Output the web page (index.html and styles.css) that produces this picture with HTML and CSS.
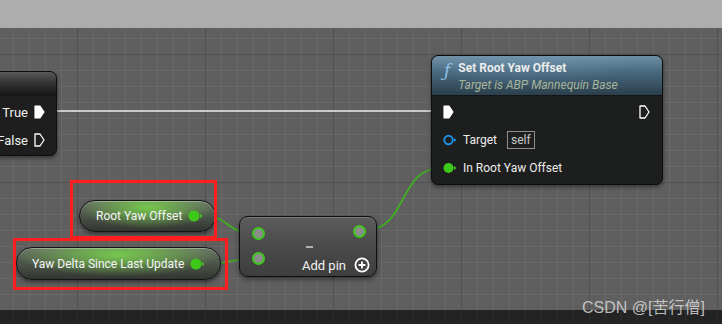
FILE: index.html
```html
<!DOCTYPE html>
<html lang="en">
<head>
<meta charset="utf-8"/>
<meta content="width=device-width, initial-scale=1.0" name="viewport"/>
<title>Blueprint</title>
<link rel="stylesheet" href="styles.css">
</head>
<body>
<div class="topbar"></div>

<div class="graph">
  <!-- wires sit under the nodes -->
  <svg class="wires" width="722" height="282" viewBox="0 0 722 282">
    <path d="M57 83 H431" stroke="#c9c9c9" stroke-width="2" fill="none"/>
    <path d="M203 187 C226 187, 228 205, 251 205" stroke="#3cb41a" stroke-width="1.6" fill="none"/>
    <path d="M206 236 C228 236, 229 231, 251 231" stroke="#3cb41a" stroke-width="1.6" fill="none"/>
    <path d="M365 202 C408 202, 398 140, 441 140" stroke="#3cb41a" stroke-width="1.6" fill="none"/>
  </svg>

  <!-- Branch -->
  <div class="node branch">
    <div class="branch-head"></div>
    <div class="branch-body">
      <div class="row right">True
        <svg class="exec" width="11" height="14" viewBox="0 0 11 14"><path d="M1 1 H6 L10 7 L6 13 H1 Z" fill="#fff" stroke="#fff" stroke-width="1.2" stroke-linejoin="round"/></svg>
      </div>
      <div class="row right">False
        <svg class="exec" width="11" height="14" viewBox="0 0 11 14"><path d="M1 1 H6 L10 7 L6 13 H1 Z" fill="none" stroke="#fff" stroke-width="1.3" stroke-linejoin="round"/></svg>
      </div>
    </div>
  </div>

  <!-- Set Root Yaw Offset -->
  <div class="node fn">
    <div class="fn-head">
      <span class="fn-icon">ƒ</span>
      <div class="fn-titles">
        <div class="fn-title">Set Root Yaw Offset</div>
        <div class="fn-sub">Target is ABP Mannequin Base</div>
      </div>
    </div>
    <div class="fn-body">
      <div class="row between">
        <svg class="exec" width="11" height="14" viewBox="0 0 11 14"><path d="M1 1 H6 L10 7 L6 13 H1 Z" fill="#fff" stroke="#fff" stroke-width="1.2" stroke-linejoin="round"/></svg>
        <svg class="exec" width="11" height="14" viewBox="0 0 11 14"><path d="M1 1 H6 L10 7 L6 13 H1 Z" fill="none" stroke="#fff" stroke-width="1.3" stroke-linejoin="round"/></svg>
      </div>
      <div class="row">
        <svg class="pin" width="14" height="12" viewBox="0 0 14 12"><circle cx="5.5" cy="6" r="4.2" fill="none" stroke="#1f8fe0" stroke-width="2"/><path d="M11 4 L13.5 6 L11 8 Z" fill="#1f8fe0"/></svg>
        <span>Target</span>
        <span class="self">self</span>
      </div>
      <div class="row">
        <svg class="pin" width="14" height="12" viewBox="0 0 14 12"><circle cx="5.5" cy="6" r="5" fill="#3dc81a"/><path d="M11 4 L13.5 6 L11 8 Z" fill="#3dc81a"/></svg>
        <span>In Root Yaw Offset</span>
      </div>
    </div>
  </div>

  <!-- getters -->
  <div class="getter get-root">
    <span>Root Yaw Offset</span>
    <svg class="pin" width="16" height="12" viewBox="0 0 16 12"><circle cx="6" cy="6" r="5.5" fill="#3dc81a"/><path d="M12 4 L14.5 6 L12 8 Z" fill="#3dc81a"/></svg>
  </div>
  <div class="getter get-delta">
    <span>Yaw Delta Since Last Update</span>
    <svg class="pin" width="16" height="12" viewBox="0 0 16 12"><circle cx="6" cy="6" r="5.5" fill="#3dc81a"/><path d="M12 4 L14.5 6 L12 8 Z" fill="#3dc81a"/></svg>
  </div>

  <div class="mark mark-root"></div>
  <div class="mark mark-delta"></div>

  <!-- subtract -->
  <div class="node minus">
    <div class="minus-in">
      <span class="ring"></span>
      <span class="ring"></span>
    </div>
    <div class="minus-mid">
      <span class="dash"></span>
      <span class="add-pin">Add pin
        <svg width="16" height="16" viewBox="0 0 16 16"><circle cx="8" cy="8" r="6.6" fill="none" stroke="#fff" stroke-width="1.8"/><path d="M8 4.6 V11.4 M4.6 8 H11.4" stroke="#fff" stroke-width="1.8"/></svg>
      </span>
    </div>
    <div class="minus-out">
      <span class="ring"></span>
    </div>
  </div>
</div>

<div class="footer"></div>

<div class="watermark">CSDN @[苦行僧]</div>
</body>
</html>
```

FILE: styles.css
```css
body {
    margin: 0;
    width: 722px;
    height: 324px;
    overflow: hidden;
    position: relative;
    font-family: Roboto, "Noto Sans", sans-serif;
    font-size: 12px;
    color: #e6e6e6;
    background: #5f5f5f;
}

.topbar {
    height: 28px;
    background: #adadad;
}

/* graph canvas with minor and major grid lines */
.graph {
    position: relative;
    height: 282px;
    background-color: #5f5f5f;
    background-image:
        linear-gradient(to right, #515151 1px, transparent 1px),
        linear-gradient(to bottom, #515151 1px, transparent 1px),
        linear-gradient(to right, #696969 1px, transparent 1px),
        linear-gradient(to bottom, #696969 1px, transparent 1px);
    background-size: 128px 128px, 128px 128px, 16px 16px, 16px 16px;
    background-position: 77px 0, 0 26px, 13px 0, 0 10px;
}

.footer {
    height: 14px;
    background-color: #232323;
    background-image: linear-gradient(to right, #2d2d2d 1px, transparent 1px);
    background-size: 16px 16px;
    background-position: 13px 0;
}

.wires {
    position: absolute;
    left: 0;
    top: 0;
}

.node {
    position: absolute;
    box-sizing: border-box;
    border: 1px solid #0d0d0d;
    box-shadow: 0 2px 4px rgba(0, 0, 0, 0.45);
}

.row {
    height: 28px;
    display: flex;
    align-items: center;
    gap: 8px;
}
.row.right { justify-content: flex-end; gap: 6px; }
.row.between { justify-content: space-between; }

.exec { display: block; }
.pin { display: block; }

/* Branch */
.branch {
    left: -10px;
    top: 43px;
    width: 67px;
    height: 85px;
    border-radius: 7px;
    background: #1d1e1d;
    overflow: hidden;
}
.branch-head {
    height: 24px;
    background: linear-gradient(#5a5a5a, #333 45%, #161616);
}
.branch-body {
    padding: 2px 11px 0 0;
    font-size: 13px;
    color: #f0f0f0;
}

/* Set Root Yaw Offset */
.fn {
    left: 431px;
    top: 27px;
    width: 232px;
    height: 130px;
    border-radius: 7px;
    background: #1d1f1e;
    overflow: hidden;
}
.fn-head {
    height: 40px;
    box-sizing: border-box;
    padding: 5px 0 0 12px;
    display: flex;
    gap: 8px;
    background:
        radial-gradient(ellipse 70% 120% at 40% 0%, rgba(120, 160, 190, 0.35), transparent 70%),
        linear-gradient(#6f8fa5, #4a6a80 40%, #2b3f4c);
    border-bottom: 1px solid #141414;
}
.fn-icon {
    font-family: "DejaVu Serif", serif;
    font-style: italic;
    font-size: 17px;
    color: #8cc2ec;
    line-height: 17px;
    margin-top: 1px;
}
.fn-title {
    font-weight: bold;
    color: #ececec;
    line-height: 15px;
}
.fn-sub {
    font-style: italic;
    color: #a7b59c;
    line-height: 18px;
}
.fn-body {
    padding: 2px 12px 0 11px;
    color: #ececec;
}
.fn-body .row { gap: 6px; }
.self {
    border: 1px solid #8f8f8f;
    color: #c8c8c8;
    padding: 1px 3px;
    margin-left: 4px;
    line-height: 14px;
}

/* variable getters */
.getter {
    position: absolute;
    box-sizing: border-box;
    height: 32px;
    border-radius: 16px;
    border: 1.5px solid #141414;
    display: flex;
    align-items: center;
    gap: 6px;
    color: #f6f6f6;
    background:
        radial-gradient(ellipse 50% 70% at 50% 22%, rgba(120, 210, 75, 0.9), transparent 100%),
        linear-gradient(#6a7367, #4f574c 45%, #323530);
    box-shadow: inset 0 1px 0 rgba(255, 255, 255, 0.3), 0 2px 4px rgba(0, 0, 0, 0.5);
}
.get-root {
    left: 79px;
    top: 172px;
    width: 137px;
    padding-left: 16px;
}
.get-delta {
    left: 16px;
    top: 219px;
    width: 205px;
    height: 33px;
    padding-left: 15px;
}

/* red annotation boxes */
.mark {
    position: absolute;
    box-sizing: border-box;
    border: 3px solid #ff1d1d;
}
.mark-root {
    left: 70px;
    top: 152px;
    width: 147px;
    height: 59px;
}
.mark-delta {
    left: 13px;
    top: 210px;
    width: 215px;
    height: 52px;
}

/* subtract node */
.minus {
    left: 239px;
    top: 188px;
    width: 138px;
    height: 61px;
    border-radius: 9px;
    background: linear-gradient(#5c5c5c, #4a4a4a 50%, #3e3e3e);
    box-shadow: inset 0 1px 0 rgba(255, 255, 255, 0.2), 0 2px 5px rgba(0, 0, 0, 0.5);
    display: flex;
    padding: 10px 10px 0 11px;
}
.ring {
    display: block;
    width: 9px;
    height: 9px;
    border-radius: 50%;
    border: 2px solid #3ec81c;
    background: #8c8c8c;
}
.minus-in {
    display: flex;
    flex-direction: column;
    gap: 12px;
    padding-left: 1px;
}
.minus-mid {
    flex: 1;
    display: flex;
    flex-direction: column;
    align-items: flex-end;
    padding-top: 19px;
}
.dash {
    width: 7px;
    height: 2px;
    background: #b0b0b0;
    margin-right: 40px;
}
.add-pin {
    margin-top: 9px;
    margin-right: -17px;
    display: flex;
    align-items: center;
    gap: 8px;
    font-size: 13px;
    color: #f2f2f2;
}
.add-pin svg { display: block; }
.minus-out {
    margin-top: -2px;
    margin-left: auto;
}

.watermark {
    position: absolute;
    left: 582px;
    top: 294px;
    font-family: "Liberation Sans", "Noto Sans CJK SC", sans-serif;
    font-size: 16px;
    color: rgba(215, 215, 215, 0.85);
}
```
